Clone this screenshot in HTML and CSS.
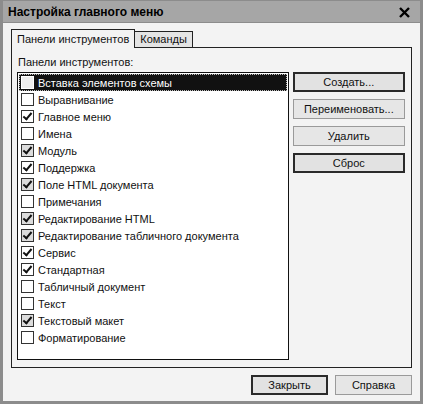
FILE: index.html
```html
<!DOCTYPE html>
<html lang="ru">
<head>
    <meta charset="UTF-8">
    <title>Настройка главного меню</title>
    <link rel="stylesheet" href="styles.css">
</head>
<body>
    <div class="window">
        <div class="titlebar">
            <div class="title">Настройка главного меню</div>
            <div class="close">
                <svg width="11" height="11" viewBox="0 0 11 11"><path d="M1 1 L10 10 M10 1 L1 10" stroke="#000" stroke-width="2.4"/></svg>
            </div>
        </div>
        <div class="content">
            <div class="tabs">
                <div class="tab active">Панели инструментов</div>
                <div class="tab">Команды</div>
            </div>
            <div class="panel">
                <div class="label">Панели инструментов:</div>
                <div class="panel-body">
                    <div class="list">
                        <div class="row selected"><span class="box"></span>Вставка элементов схемы</div>
                        <div class="row"><span class="box"></span>Выравнивание</div>
                        <div class="row"><span class="box checked"></span>Главное меню</div>
                        <div class="row"><span class="box"></span>Имена</div>
                        <div class="row"><span class="box checked grey"></span>Модуль</div>
                        <div class="row"><span class="box checked"></span>Поддержка</div>
                        <div class="row"><span class="box checked grey"></span>Поле HTML документа</div>
                        <div class="row"><span class="box"></span>Примечания</div>
                        <div class="row"><span class="box checked grey"></span>Редактирование HTML</div>
                        <div class="row"><span class="box checked grey"></span>Редактирование табличного документа</div>
                        <div class="row"><span class="box checked"></span>Сервис</div>
                        <div class="row"><span class="box checked"></span>Стандартная</div>
                        <div class="row"><span class="box"></span>Табличный документ</div>
                        <div class="row"><span class="box"></span>Текст</div>
                        <div class="row"><span class="box checked grey"></span>Текстовый макет</div>
                        <div class="row"><span class="box"></span>Форматирование</div>
                    </div>
                    <div class="side-buttons">
                        <button class="btn strong">Создать...</button>
                        <button class="btn light">Переименовать...</button>
                        <button class="btn light">Удалить</button>
                        <button class="btn strong">Сброс</button>
                    </div>
                </div>
            </div>
            <div class="footer">
                <button class="btn strong wide">Закрыть</button>
                <button class="btn light wide">Справка</button>
            </div>
        </div>
    </div>
</body>
</html>
```

FILE: styles.css
```css
body {
    margin: 0;
    padding: 0;
    background: #fff;
    font-family: 'Liberation Sans', Arial, sans-serif;
    font-size: 11px;
    color: #111;
}
.window {
    width: 423px;
    height: 404px;
    box-sizing: border-box;
    border: 3px solid #8c8c8c;
    border-top: 1px solid #8c8c8c;
    background: #f3f3f3;
    display: flex;
    flex-direction: column;
}
.titlebar {
    height: 21px;
    background: #a6a6a6;
    border-bottom: 1px solid #8c8c8c;
    display: flex;
    align-items: center;
    justify-content: space-between;
    padding: 0 10px 0 5px;
}
.title {
    font-weight: bold;
    font-size: 12px;
    color: #000;
}
.close {
    display: flex;
    padding-top: 1px;
}
.content {
    flex: 1;
    padding: 7px 8px 0 8px;
    display: flex;
    flex-direction: column;
}
.tabs {
    display: flex;
    align-items: flex-end;
    height: 17px;
    position: relative;
    z-index: 1;
}
.tab {
    background: #e4e4e4;
    border: 1px solid #222;
    border-bottom: none;
    border-left: none;
    padding: 0 5px;
    height: 15px;
    line-height: 15px;
}
.tab.active {
    background: #f3f3f3;
    height: 18px;
    line-height: 18px;
    border-left: 1px solid #222;
    margin-bottom: -1px;
}
.panel {
    border: 1px solid #222;
    height: 321px;
    box-sizing: border-box;
    padding: 6px 6px 7px 5px;
    display: flex;
    flex-direction: column;
}
.label {
    height: 18px;
    line-height: 16px;
    padding-left: 1px;
}
.panel-body {
    flex: 1;
    display: flex;
    gap: 4px;
}
.list {
    width: 273px;
    box-sizing: border-box;
    border: 1px solid #111;
    background: #fff;
    padding-top: 1px;
}
.row {
    height: 17px;
    display: flex;
    align-items: center;
    padding-left: 3px;
}
.row.selected {
    background: #111;
    color: #fff;
    outline: 1px dotted #bbb;
    outline-offset: -1px;
    margin: 0 1px;
    padding-left: 2px;
}
.box {
    width: 11px;
    height: 11px;
    border: 1px solid #333;
    background: #fff;
    margin-right: 4px;
    flex-shrink: 0;
    position: relative;
}
.selected .box {
    background: #eee;
    border-color: #fff;
}
.box.grey {
    background: #dcdcdc;
}
.box.checked::after {
    content: "";
    position: absolute;
    left: 3px;
    top: 0;
    width: 3px;
    height: 7px;
    border: solid #111;
    border-width: 0 2px 2px 0;
    transform: rotate(40deg);
}
.side-buttons {
    display: flex;
    flex-direction: column;
    gap: 7px;
    width: 113px;
}
.btn {
    font-family: 'Liberation Sans', Arial, sans-serif;
    font-size: 11px;
    color: #111;
    background: #e2e2e2;
    height: 20px;
    padding: 0;
    box-sizing: border-box;
    border: 1px solid #222;
    cursor: pointer;
}
.btn.strong {
    border: 2px solid #2a2a2a;
}
.btn.light {
    border: 1px solid #9a9a9a;
    background: #e6e6e6;
}
.footer {
    display: flex;
    justify-content: flex-end;
    gap: 7px;
    padding-top: 7px;
}
.btn.wide {
    width: 77px;
}
```
